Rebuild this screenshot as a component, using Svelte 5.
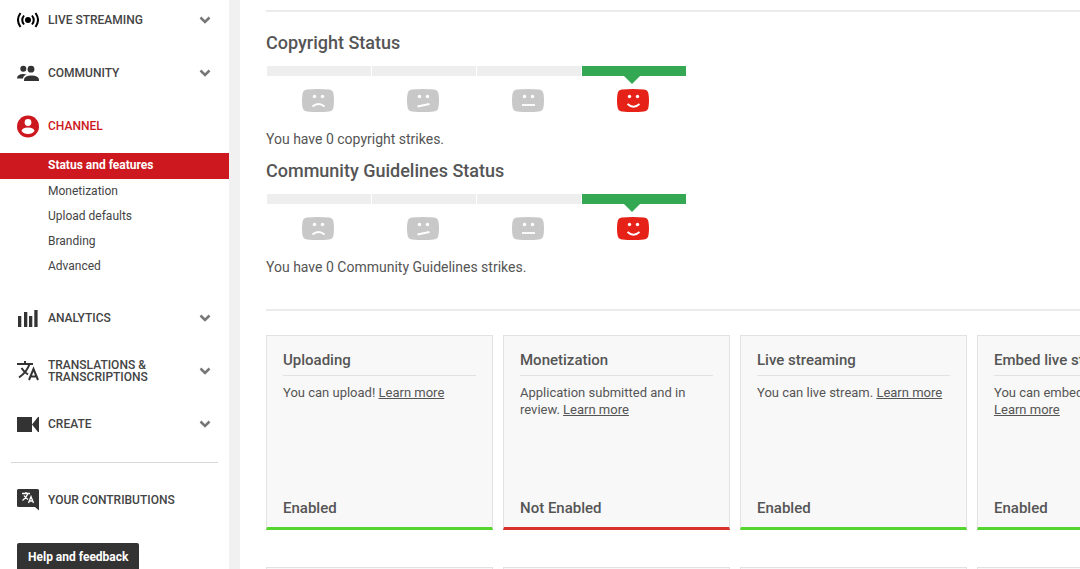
<script lang="ts">
	type Status = 'enabled' | 'pending';

	const before = [
		{ label: 'Live streaming', icon: 'live' },
		{ label: 'Community', icon: 'community' }
	];
	const after = [
		{ label: 'Analytics', icon: 'analytics' },
		{ label: 'Translations & transcriptions', icon: 'translate' },
		{ label: 'Create', icon: 'create' }
	];
	const channelPages = [
		'Status and features',
		'Monetization',
		'Upload defaults',
		'Branding',
		'Advanced'
	];
	const strikes = [
		{ title: 'Copyright Status', text: 'You have 0 copyright strikes.' },
		{ title: 'Community Guidelines Status', text: 'You have 0 Community Guidelines strikes.' }
	];

	// Mouths from worst standing to best
	const mouths = [
		'M10.500 17.500Q16.500 12.500 22.500 17.500',
		'M10.500 17.500L22.500 15',
		'M10 16H23',
		'M10.500 15Q16.500 20.500 22.500 15'
	];
	const current = 3;

	const features: { title: string; text: string; status: Status }[] = [
		{ title: 'Uploading', text: 'You can upload!', status: 'enabled' },
		{ title: 'Monetization', text: 'Application submitted and in review.', status: 'pending' },
		{ title: 'Live streaming', text: 'You can live stream.', status: 'enabled' },
		{ title: 'Embed live streams', text: 'You can embed live streams.', status: 'enabled' }
	];
</script>

{#snippet icon(name: string)}
	<svg class="icon" viewBox="0 0 22 24" aria-hidden="true">
		{#if name === 'live'}
			<circle cx="11" cy="12" r="3" fill="#000" />
			<path
				d="M7 7.500Q3.500 12 7 16.500M15 7.500Q18.500 12 15 16.500M3.500 5Q-1.500 12 3.500 19M18.500 5Q23.500 12 18.500 19"
				fill="none"
				stroke="#000"
				stroke-width="2"
			/>
		{:else if name === 'community'}
			<circle cx="6.300" cy="7.800" r="3" />
			<circle cx="14" cy="8.200" r="3.400" />
			<path d="M0 17.500Q0 13 6.500 13L9.500 13.500Q6 14.800 6 17.500Z" />
			<path d="M7 20V19Q7 14.500 14.500 14.500T22 19V20Z" />
		{:else if name === 'channel'}
			<circle cx="11" cy="12.500" r="11" />
			<circle cx="11" cy="8.500" r="3.400" fill="#fff" />
			<path d="M4.500 17Q5 13.500 11 13.500T17.500 17Q15.500 20 11 20T4.500 17Z" fill="#fff" />
		{:else if name === 'analytics'}
			<path d="M1 10H4.300V21H1ZM7 6H10.300V21H7ZM12 10H15.300V21H12ZM17.300 4H20.600V21H17.300Z" />
		{:else if name === 'translate'}
			<path
				d="M0 5H16M8 2V5M12.500 5Q10 13 2 18.500M4.500 9Q7 13 11 15.500M12 21L16.500 10L21 21M13.500 17.500H19.500"
				fill="none"
				stroke="#333"
				stroke-width="2"
			/>
		{:else if name === 'create'}
			<path d="M0 5H15V20H0ZM15 12.500L21 5H22V20H21Z" />
		{:else}
			<path d="M1.500 1H20.500Q22 1 22 2.500V22.500L18 19H1.500Q0 19 0 17.500V2.500Q0 1 1.500 1Z" />
			<path
				d="M5 5.500H13M9 4V5.500M11 5.500Q9.500 9.500 5.500 12.500M7 7.500Q8.500 10 11 11.500M11.500 15L14 8.500L16.500 15M12.500 13H15.500"
				fill="none"
				stroke="#fff"
				stroke-width="1.300"
			/>
		{/if}
	</svg>
{/snippet}

{#snippet menuItem(item: { label: string; icon: string })}
	<li>
		<button class="section" type="button" aria-expanded="false">
			{@render icon(item.icon)}
			<span>{item.label}</span>
			<svg class="chevron" viewBox="0 0 12 8" aria-hidden="true">
				<path d="M1.500 1.500L6 6L10.500 1.500" />
			</svg>
		</button>
	</li>
{/snippet}

<div class="page">
	<aside>
		<nav>
			<ul class="sections">
				{#each before as item}
					{@render menuItem(item)}
				{/each}
				<li>
					<a class="section open" href="#channel">
						{@render icon('channel')}
						<span>Channel</span>
					</a>
					<ul class="subpages">
						{#each channelPages as page, i}
							<li><a href="#channel" class:active={i === 0}>{page}</a></li>
						{/each}
					</ul>
				</li>
				{#each after as item}
					{@render menuItem(item)}
				{/each}
			</ul>
			<hr />
			<a class="section" href="#contributions">
				{@render icon('contributions')}
				<span>Your contributions</span>
			</a>
		</nav>
		<button class="help" type="button">Help and feedback</button>
	</aside>

	<main>
		<hr />
		{#each strikes as strike}
			<section class="standing">
				<h2>{strike.title}</h2>
				<div class="bar">
					{#each mouths as _, i}
						<div class="segment" class:current={i === current}></div>
					{/each}
				</div>
				<div class="faces">
					{#each mouths as mouth, i}
						<svg class="face" class:current={i === current} viewBox="0 0 32 23" aria-hidden="true">
							<path
								d="M5 .5Q16 -.5 27 .5Q31 .8 31.500 5Q32.500 11.500 31.500 18Q31 22.200 27 22.500Q16 23.500 5 22.500Q1 22.200 .5 18Q-.5 11.500 .5 5Q1 .8 5 .5Z"
							/>
							<circle cx="12.500" cy="7.500" r="1.700" />
							<circle cx="20.500" cy="7.500" r="1.700" />
							<path class="mouth" d={mouth} />
						</svg>
					{/each}
				</div>
				<p>{strike.text}</p>
			</section>
		{/each}
		<hr class="divider" />

		<div class="features">
			{#each features as feature}
				<article class={feature.status}>
					<h3>{feature.title}</h3>
					<p>{feature.text} <a href="#learn">Learn more</a></p>
					<strong>{feature.status === 'enabled' ? 'Enabled' : 'Not Enabled'}</strong>
				</article>
			{/each}
			{#each features as _}
				<article></article>
			{/each}
		</div>
	</main>
</div>

<style>
	:global(body) {
		overflow: hidden;
		background: #fff;
	}

	.page {
		display: flex;
		height: 100vh;
		overflow: hidden;
		font-family: Roboto, 'Liberation Sans', sans-serif;
		color: #555;
	}

	a {
		color: inherit;
		text-decoration: none;
	}

	button {
		border: 0;
		padding: 0;
		font-family: inherit;
		cursor: pointer;
	}

	ul {
		margin: 0;
		padding: 0;
		list-style: none;
	}

	hr {
		margin: 0;
		border: 0;
		height: 2px;
		background: #ebebeb;
	}

	aside {
		flex: none;
		width: 229px;
		padding-top: 8px;
		border-right: 11px solid #f1f1f1;
	}

	.sections {
		display: flex;
		flex-direction: column;
		gap: 29px;
	}

	.section {
		display: flex;
		align-items: center;
		gap: 9px;
		box-sizing: border-box;
		width: 100%;
		height: 24px;
		padding: 0 18px 0 17px;
		background: none;
		color: #444;
		font-size: 12px;
		font-weight: 500;
		line-height: 12px;
		text-align: left;
		text-transform: uppercase;
	}

	.section span {
		flex: 1;
	}

	.section.open {
		color: #cc181e;
	}

	.icon {
		flex: none;
		width: 22px;
		height: 24px;
		fill: #333;
	}

	.open .icon {
		fill: #cc181e;
	}

	.chevron {
		flex: none;
		width: 12px;
		height: 8px;
		fill: none;
		stroke: #777;
		stroke-width: 2.5;
	}

	.subpages {
		margin-bottom: -2px;
		padding-top: 15px;
	}

	.subpages a {
		display: block;
		padding-left: 48px;
		font-size: 12px;
		line-height: 25px;
		color: #444;
	}

	.subpages .active {
		padding-bottom: 1px;
		background: #cc181e;
		color: #fff;
		font-weight: 700;
	}

	aside hr {
		height: 1px;
		margin: 26px 11px 25px;
		background: #d8d8d8;
	}

	.help {
		margin: 31px 17px 0;
		padding: 0 11px;
		border-radius: 2px;
		background: #333;
		color: #fff;
		font-size: 12px;
		font-weight: 700;
		line-height: 28px;
	}

	main {
		flex: 1;
		min-width: 0;
		padding: 10px 0 0 26px;
	}

	h2 {
		margin: 0 0 11px;
		font-size: 18px;
		font-weight: 500;
		line-height: 24px;
	}

	.standing {
		padding-top: 10px;
	}

	hr + .standing {
		padding-top: 19px;
	}

	.bar {
		display: grid;
		grid-template-columns: repeat(4, 104px);
		gap: 1px;
		padding-left: 1px;
	}

	.segment {
		position: relative;
		height: 10px;
		background: #eee;
	}

	.segment.current {
		background: #34a853;
	}

	.segment.current::after {
		content: '';
		position: absolute;
		top: 100%;
		left: 42px;
		border: 8px solid transparent;
		border-top-color: #34a853;
		border-bottom: 0;
	}

	.faces {
		display: flex;
		gap: 73px;
		padding: 13px 0 17px 36px;
	}

	.face {
		flex: none;
		width: 32px;
		height: 23px;
		fill: #c8c8c8;
	}

	.face.current {
		fill: #e62117;
	}

	.face circle {
		fill: #fff;
	}

	.face .mouth {
		fill: none;
		stroke: #fff;
		stroke-width: 1.8;
	}

	.standing p {
		margin: 0;
		font-size: 14px;
		line-height: 20px;
	}

	.divider {
		margin: 32px 0 24px;
	}

	.features {
		display: grid;
		grid-template-columns: repeat(4, 227px);
		gap: 37px 10px;
	}

	article {
		display: flex;
		flex-direction: column;
		box-sizing: border-box;
		min-height: 195px;
		padding: 12px 16px 9px;
		border: 1px solid #e2e2e2;
		border-bottom-width: 3px;
		background: #f8f8f8;
	}

	.enabled {
		border-bottom-color: #55d52e;
	}

	.pending {
		border-bottom-color: #d9302c;
	}

	h3 {
		margin: 0 0 8px;
		padding-bottom: 3px;
		border-bottom: 1px solid #e2e2e2;
		font-size: 15px;
		font-weight: 500;
		line-height: 24px;
	}

	article p {
		margin: 0;
		font-size: 13px;
		line-height: 17px;
	}

	article p a {
		white-space: nowrap;
		text-decoration: underline;
	}

	strong {
		margin-top: auto;
		font-size: 15px;
		font-weight: 500;
		line-height: 20px;
	}
</style>
